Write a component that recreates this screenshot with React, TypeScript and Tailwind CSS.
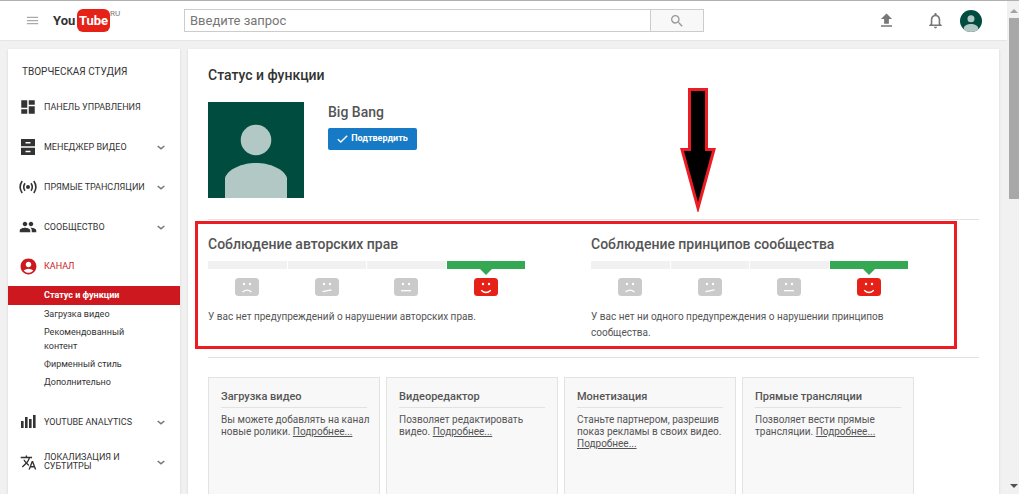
import React from 'react';
import { MdAccountCircle, MdDashboard, MdFileUpload, MdMenu, MdNotificationsNone, MdPeople, MdSearch, MdTranslate } from 'react-icons/md';

const ArchiveIcon: React.FC = () => (
  <svg viewBox="0 0 14 16" className="w-[14px] h-4" fill="currentColor">
    <path fillRule="evenodd" d="M0 0h14v7.200H0zM4.500 3v1.500h5V3zM0 8.800h14V16H0zM4.500 11.800v1.500h5v-1.500z" />
  </svg>
);

const LiveIcon: React.FC = () => (
  <svg viewBox="0 0 18 14" className="w-[18px] h-[14px]" fill="none" stroke="currentColor" strokeWidth="1.6">
    <circle cx="9" cy="7" r="2" fill="currentColor" stroke="none" />
    <path d="M6 3.2Q3.4 7 6 10.8M12 3.2Q14.6 7 12 10.8M3.2 1Q-1 7 3.2 13M14.8 1Q19 7 14.8 13" />
  </svg>
);

const AnalyticsIcon: React.FC = () => (
  <svg viewBox="0 0 15 14" className="w-[15px] h-[14px]" fill="currentColor">
    <path d="M0 6h2.600v7H0zM4 2h2.600v11H4zM8 4h2.600v9H8zM12 0h2.600v13H12z" />
  </svg>
);

const ChevronIcon: React.FC = () => (
  <svg viewBox="0 0 8 5" className="w-2 h-[5px] shrink-0 text-[#777]" fill="none" stroke="currentColor" strokeWidth="1.6">
    <path d="M0.7 1L4 3.8L7.3 1" />
  </svg>
);

const Avatar: React.FC<{ className: string }> = ({ className }) => (
  <svg viewBox="0 0 96 96" className={className}>
    <path fill="#004d40" d="M0 0h96v96H0z" />
    <circle cx="48" cy="38" r="15.3" fill="#b2c8c5" />
    <path fill="#b2c8c5" d="M17 96V76C20 67 34 61 48 61s28 6 31 15v20z" />
  </svg>
);

const mouths = ['M7.5 14Q12 10.4 16.5 14', 'M7.5 13.6L16.500 11.800', 'M7 12.7h10', 'M7.2 12.2Q12 16.8 16.8 12.2'];

const Face: React.FC<{ mood: number }> = ({ mood }) => (
  <svg viewBox="0 0 24 18" className="w-6 h-[18px]">
    <rect width="24" height="18" rx="3.500" fill={mood === 3 ? '#e62117' : '#cacaca'} />
    <circle cx="9" cy="6" r="1.2" fill="#fff" />
    <circle cx="15" cy="6" r="1.2" fill="#fff" />
    <path d={mouths[mood]} fill="none" stroke="#fff" strokeWidth="1.3" />
  </svg>
);

const menuTop = [
  { label: 'Панель управления', icon: <MdDashboard size={18} />, expandable: false },
  { label: 'Менеджер видео', icon: <ArchiveIcon />, expandable: true },
  { label: 'Прямые трансляции', icon: <LiveIcon />, expandable: true },
  { label: 'Сообщество', icon: <MdPeople size={18} />, expandable: true },
];

const menuBottom = [
  { label: 'YouTube Analytics', icon: <AnalyticsIcon />, expandable: true },
  { label: 'Локализация и субтитры', icon: <MdTranslate size={17} />, expandable: true },
];

const channelLinks = ['Загрузка видео', 'Рекомендованный контент', 'Фирменный стиль', 'Дополнительно'];

const features = [
  { title: 'Загрузка видео', text: 'Вы можете добавлять на канал новые ролики.' },
  { title: 'Видеоредактор', text: 'Позволяет редактировать видео.' },
  { title: 'Монетизация', text: 'Станьте партнером, разрешив показ рекламы в своих видео.' },
  { title: 'Прямые трансляции', text: 'Позволяет вести прямые трансляции.' },
];

const MenuItem: React.FC<{ label: string; icon: React.ReactNode; expandable: boolean }> = ({ label, icon, expandable }) => (
  <li>
    <a href="#" className="flex items-center h-10 pl-[11px] pr-[15px] text-[#333]">
      <span className="w-[18px] mr-[7px] flex justify-center shrink-0">{icon}</span>
      <span className="flex-1 text-[9px] leading-[9px] uppercase">{label}</span>
      {expandable && <ChevronIcon />}
    </a>
  </li>
);

const Standing: React.FC<{ title: string; text: string }> = ({ title, text }) => (
  <div>
    <h2 className="text-sm leading-4 font-medium text-[#555]">{title}</h2>
    <div className="grid grid-cols-4 gap-px w-[317px] mt-[9px]">
      {mouths.map((mouth, i) => (
        <div key={mouth} className="flex flex-col items-center">
          <div className={i === 3 ? 'w-full h-2 bg-[#34a853]' : 'w-full h-2 bg-[#f1f1f1]'} />
          <svg viewBox="0 0 12 6" className="w-3 h-[6px] mb-[3px]">
            {i === 3 && <path fill="#34a853" d="M0 0h12L6 6z" />}
          </svg>
          <Face mood={i} />
        </div>
      ))}
    </div>
    <p className="w-[320px] mt-[13px] text-[10px] leading-4 text-[#555]">{text}</p>
  </div>
);

const App: React.FC = () => {
  return (
    <div className="flex h-screen overflow-hidden bg-[#f1f1f1] border-t border-[#b0b0b0] font-[Roboto,sans-serif] text-[#333]">
      <div className="flex-1 min-w-0">
        <header className="flex items-center h-10 bg-white border-b border-[#e5e5e5] px-[25px]">
          <button type="button" aria-label="Меню" className="text-[#aaa]">
            <MdMenu size={15} />
          </button>
          <a href="#" className="flex items-center w-[131px] ml-[13px] shrink-0 text-[#333]">
            <span className="w-6 text-[13px] font-bold">You</span>
            <span className="w-[33px] h-[23px] rounded-md bg-[#e62117] text-white text-center text-[13px] leading-[23px] font-bold">Tube</span>
            <span className="self-start text-[8px] leading-[9px] text-[#777]">RU</span>
          </a>
          <form className="flex w-[520px] h-[23px]">
            <input
              type="text"
              aria-label="Поиск"
              placeholder="Введите запрос"
              className="flex-1 min-w-0 px-[5px] border border-[#ccc] bg-white text-[13px] placeholder:text-[#767676] outline-none"
            />
            <button type="submit" aria-label="Найти" className="flex items-center justify-center w-[53px] border border-l-0 border-[#ccc] bg-[#f8f8f8] text-[#999]">
              <MdSearch size={16} />
            </button>
          </form>
          <div className="flex items-center ml-auto">
            <button type="button" aria-label="Добавить видео" className="text-[#777] mr-[30px]">
              <MdFileUpload size={19} />
            </button>
            <button type="button" aria-label="Уведомления" className="text-[#777] mr-[15px]">
              <MdNotificationsNone size={19} />
            </button>
            <button type="button" aria-label="Аккаунт">
              <Avatar className="w-[22px] h-[22px] rounded-full" />
            </button>
          </div>
        </header>

        <div className="flex items-start gap-2 p-2">
          {/* Sidebar */}
          <nav className="w-[172px] shrink-0 bg-white shadow-sm pb-5">
            <h2 className="pt-4 mb-2 pl-[14px] text-[10px] leading-[14px] uppercase">Творческая студия</h2>
            <ul>
              {menuTop.map((item) => (
                <MenuItem key={item.label} {...item} />
              ))}
              <li>
                <a href="#" className="flex items-center h-[39px] pl-[11px] text-[#cc181e]">
                  <MdAccountCircle size={19} className="mr-[6px]" />
                  <span className="text-[9px] leading-[9px] uppercase">Канал</span>
                </a>
                <ul className="mb-[11px] text-[9px] leading-[14px]">
                  <li>
                    <a href="#" className="block h-[19px] pl-9 py-[2px] bg-[#cc181e] text-white font-bold">Статус и функции</a>
                  </li>
                  {channelLinks.map((label) => (
                    <li key={label}>
                      <a href="#" className="block pl-9 pr-10 py-[2px]">{label}</a>
                    </li>
                  ))}
                </ul>
              </li>
              {menuBottom.map((item) => (
                <MenuItem key={item.label} {...item} />
              ))}
            </ul>
          </nav>

          {/* Channel status */}
          <main className="flex-1 min-w-0 bg-white shadow-sm px-5 pt-[18px] pb-5">
            <h1 className="text-sm leading-4 font-medium">Статус и функции</h1>

            <div className="relative flex gap-6 mt-[19px] pb-[21px] border-b border-[#e2e2e2]">
              <Avatar className="w-24 h-24" />
              <div>
                <h2 className="mt-[2px] text-sm leading-4 font-medium text-[#555]">Big Bang</h2>
                <button type="button" className="flex items-center justify-center gap-[3px] w-[89px] h-[22px] mt-2 rounded-xs bg-[#167ac6] text-white text-[9px] font-bold">
                  <svg viewBox="0 0 11 8" className="w-[11px] h-2" fill="none" stroke="currentColor" strokeWidth="1.4">
                    <path d="M.8 4.2L3.8 7L10.2.8" />
                  </svg>
                  Подтвердить
                </button>
              </div>
              {/* Pointer to the highlighted block */}
              <svg viewBox="0 0 36 124" className="absolute right-[263px] -top-[14px] w-9 h-[124px]">
                <path d="M9.5 1.5h17v60h7.5L18 120 2 61.500h7.500z" fill="#000" stroke="#ed1c24" strokeWidth="3" />
              </svg>
            </div>

            <section className="relative pt-4 pb-4 border-b border-[#e2e2e2]">
              <div className="grid grid-cols-2 mr-[5px]">
                <Standing title="Соблюдение авторских прав" text="У вас нет предупреждений о нарушении авторских прав." />
                <Standing title="Соблюдение принципов сообщества" text="У вас нет ни одного предупреждения о нарушении принципов сообщества." />
              </div>
              <div className="absolute -left-[13px] right-[22px] top-px bottom-2 border-3 border-[#ed1c24]" />
            </section>

            <div className="flex flex-wrap gap-[6px] mt-[19px]">
              {features.map(({ title, text }) => (
                <article key={title} className="w-[172px] min-h-[140px] px-3 pt-3 pb-4 border border-[#e2e2e2] bg-[#f8f8f8] text-[#555]">
                  <h3 className="pb-1 mb-[6px] border-b border-[#e2e2e2] text-[11px] leading-[13px] font-medium">{title}</h3>
                  <p className="-mr-2 text-[10px] leading-3">
                    {text} <a href="#" className="underline">Подробнее...</a>
                  </p>
                </article>
              ))}
            </div>
          </main>
        </div>
      </div>

      {/* Scrollbar */}
      <div className="flex flex-col items-center w-3 shrink-0 pt-2 pb-[6px] pl-[2px] bg-[#f1f1f1]">
        <svg viewBox="0 0 8 4" className="w-2 h-1 shrink-0 mb-[5px]">
          <path fill="#a3a3a3" d="M0 4L4 0l4 4z" />
        </svg>
        <div className="w-full h-[181px] bg-[#a8a8a8]" />
        <svg viewBox="0 0 8 4" className="w-2 h-1 mt-auto shrink-0">
          <path fill="#505050" d="M0 0h8L4 4z" />
        </svg>
      </div>
    </div>
  );
};

export default App;
